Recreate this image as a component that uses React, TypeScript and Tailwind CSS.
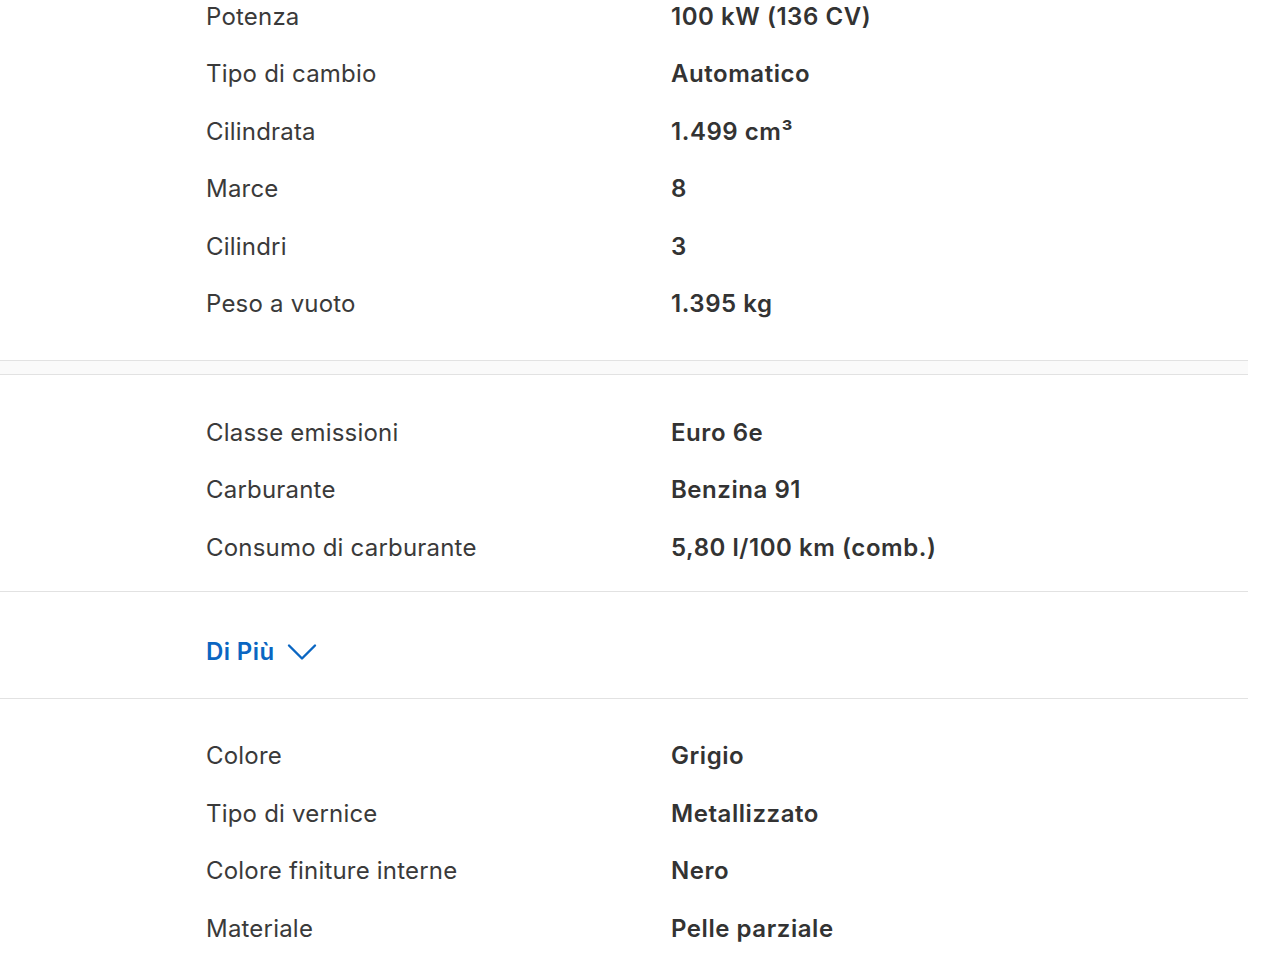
import React from 'react'

type Row = [string, string]

const engine: Row[] = [
  ['Potenza', '100 kW (136 CV)'],
  ['Tipo di cambio', 'Automatico'],
  ['Cilindrata', '1.499 cm³'],
  ['Marce', '8'],
  ['Cilindri', '3'],
  ['Peso a vuoto', '1.395 kg'],
]

const fuel: Row[] = [
  ['Classe emissioni', 'Euro 6e'],
  ['Carburante', 'Benzina 91'],
  ['Consumo di carburante', '5,80 l/100 km (comb.)'],
]

const colour: Row[] = [
  ['Colore', 'Grigio'],
  ['Tipo di vernice', 'Metallizzato'],
  ['Colore finiture interne', 'Nero'],
  ['Materiale', 'Pelle parziale'],
]

function SpecRows({ rows }: { rows: Row[] }) {
  return (
    <dl>
      {rows.map(([label, value]) => (
        <div key={label} className="flex h-[57.5px] items-center pt-[2px]">
          <dt className="w-[465px] shrink-0 tracking-[0.2px] text-[#3a3a3a]">{label}</dt>
          <dd className="font-semibold tracking-[0.55px] text-[#333333]">{value}</dd>
        </div>
      ))}
    </dl>
  )
}

export default function App() {
  return (
    <div
      className="h-[960px] overflow-hidden bg-white pr-8 text-[24px]"
      style={{ fontFamily: 'Inter, "Noto Sans", sans-serif' }}
    >
      {/* Motore */}
      <section className="-mt-[13px] border-b border-[#e2e2e2] pb-[28px] pl-[206px]">
        <SpecRows rows={engine} />
      </section>

      {/* separator band */}
      <div className="h-[14px] border-b border-[#e2e2e2] bg-[#fafafa]" />

      {/* Ambiente */}
      <section className="border-b border-[#e2e2e2] pb-[15px] pl-[206px] pt-[28px]">
        <SpecRows rows={fuel} />
      </section>

      <div className="flex h-[107px] items-center border-b border-[#e2e2e2] pl-[206px] pt-[15px]">
        <button type="button" className="flex items-center gap-[12px] font-semibold tracking-[0.4px] text-[#0a66c2]">
          Di Più
          <svg width="30" height="18" viewBox="0 0 30 18" fill="none">
            <path d="M2 2.5L15 15.5L28 2.5" stroke="#0a66c2" strokeWidth="2.4" strokeLinecap="round" strokeLinejoin="round" />
          </svg>
        </button>
      </div>

      {/* Colore e interni */}
      <section className="pl-[206px] pt-[28px]">
        <SpecRows rows={colour} />
      </section>
    </div>
  )
}
